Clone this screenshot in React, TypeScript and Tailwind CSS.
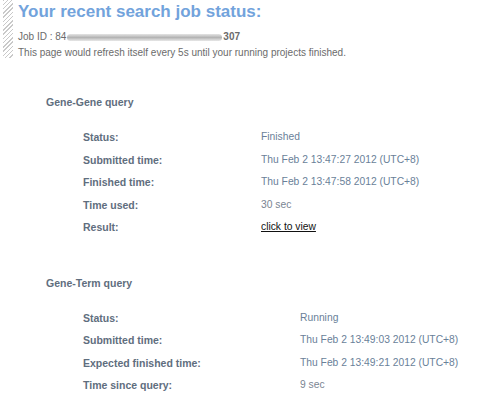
const gg = [
  { label: "Status:", value: "Finished" },
  { label: "Submitted time:", value: "Thu Feb 2 13:47:27 2012 (UTC+8)" },
  { label: "Finished time:", value: "Thu Feb 2 13:47:58 2012 (UTC+8)" },
  { label: "Time used:", value: "30 sec", plain: true },
  { label: "Result:", value: "click to view", link: true },
]

const gt = [
  { label: "Status:", value: "Running" },
  { label: "Submitted time:", value: "Thu Feb 2 13:49:03 2012 (UTC+8)" },
  { label: "Expected finished time:", value: "Thu Feb 2 13:49:21 2012 (UTC+8)" },
  { label: "Time since query:", value: "9 sec", plain: true },
]

type Row = { label: string; value: string; plain?: boolean; link?: boolean }

const Section = ({ title, rows, col }: { title: string; rows: Row[]; col: string }) => {
  return (
    <div>
      <h3 className="pl-[46px] text-[10.5px] font-bold leading-[14px] text-[#5f6e7e]">{title}</h3>
      <div className={`mt-[17px] grid pl-[83px] ${col}`}>
        {rows.map((r) => (
          <div key={r.label} className="contents">
            <div className="text-[10.5px] font-bold leading-[22.5px] text-[#5f6e7e]">{r.label}</div>
            <div className="text-[10.3px] leading-[22.5px]">
              {r.link ? (
                <a className="text-[#111] underline">{r.value}</a>
              ) : (
                <span className={r.plain ? "text-[#7a8592]" : "text-[#6a7f99]"}>{r.value}</span>
              )}
            </div>
          </div>
        ))}
      </div>
    </div>
  )
}

const App = () => {
  return (
    <div className="w-[500px] h-[408px] bg-white overflow-hidden" style={{ fontFamily: '"Liberation Sans", Arial, sans-serif' }}>
      {/* Header */}
      <div className="flex">
        <div className="ml-[3px] w-[10px] h-[58px] bg-[repeating-linear-gradient(135deg,#c9c9c9_0px,#c9c9c9_1px,#ffffff_1px,#ffffff_3px)]" />
        <div className="pl-[5px]">
          <h1 className="text-[17px] font-bold leading-[24px] text-[#72a3dc]">Your recent search job status:</h1>
          <div className="mt-[5px] flex items-center text-[10px] leading-[16px] text-[#6b6b6b]">
            <span>Job ID : 84</span>
            <span className="mx-[1px] h-[7px] w-[155px] rounded-sm bg-[linear-gradient(180deg,#e4e4e4,#b4b4b4_50%,#e8e8e8)] blur-[0.6px]" />
            <span className="font-bold">307</span>
          </div>
          <p className="text-[10px] leading-[16px] text-[#6b6b6b]">This page would refresh itself every 5s until your running projects finished.</p>
        </div>
      </div>

      <div className="mt-[34px]">
        <Section title="Gene-Gene query" rows={gg} col="grid-cols-[178px_1fr]" />
      </div>
      <div className="mt-[37px]">
        <Section title="Gene-Term query" rows={gt} col="grid-cols-[217px_1fr]" />
      </div>
    </div>
  )
}

export default App
